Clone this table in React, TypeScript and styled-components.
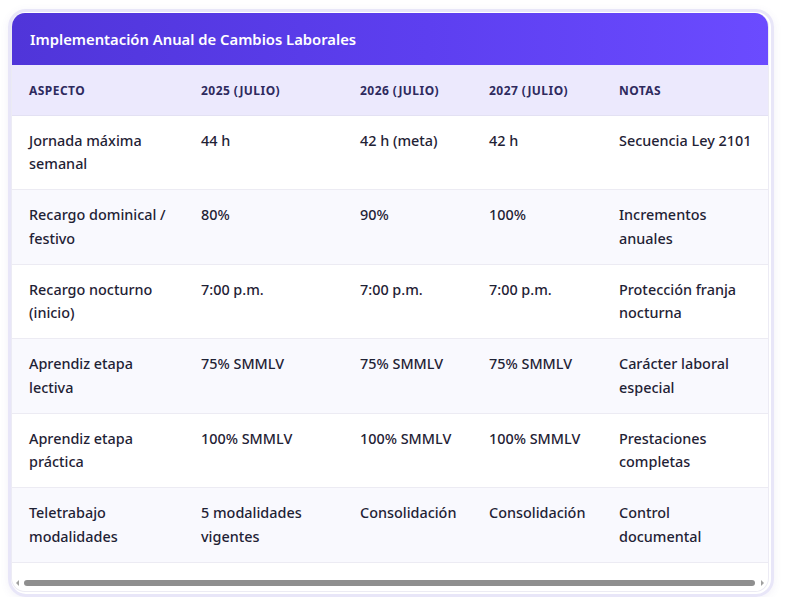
import React from "react";
import styled, { createGlobalStyle } from "styled-components";

const Global = createGlobalStyle`
  html, body { margin: 0; padding: 0; background: #ffffff; }
  body { font-family: "Noto Sans", "Open Sans", sans-serif; }
`;

const Frame = styled.div`
  margin: 9px 15px 0 8px;
  width: 766px;
  box-sizing: border-box;
  border: 3px solid #e8e6f8;
  border-radius: 18px;
  padding: 1px 2px 2px 0;
  box-shadow: 0 2px 8px rgba(90, 80, 160, 0.08);
`;

const Card = styled.div`
  border-radius: 14px;
  overflow: hidden;
  background: #ffffff;
  border: 1px solid #ecebf4;
  border-top: none;
`;

const Header = styled.div`
  height: 52px;
  display: flex;
  align-items: center;
  padding: 0 18px;
  background: linear-gradient(90deg, #5035d9 0%, #5d3ff0 55%, #6b4bff 100%);
  color: #ffffff;
  font-size: 14.8px;
  font-weight: 600;
`;

const Scroller = styled.div`
  overflow: hidden;
`;

const Table = styled.table`
  width: 772px;
  border-collapse: collapse;
  table-layout: fixed;
`;

const HeadRow = styled.tr`
  background: #ece9fd;
`;

const Th = styled.th<{ $w: number }>`
  width: ${(p) => p.$w}px;
  height: 50px;
  box-sizing: border-box;
  padding: 1px 17px 0;
  text-align: left;
  font-size: 12px;
  font-weight: 700;
  letter-spacing: 0.45px;
  color: #2e2a5e;
  text-transform: uppercase;
  border-bottom: 1px solid #e3e1f3;
`;

const Row = styled.tr<{ $alt: boolean }>`
  background: ${(p) => (p.$alt ? "#f9f9fe" : "#ffffff")};
  border-bottom: 1px solid #ecebf3;
`;

const Td = styled.td<{ $pr?: number }>`
  padding: 13px ${(p) => p.$pr ?? 17}px 13.5px 17px;
  vertical-align: top;
  font-size: 14.4px;
  font-weight: 500;
  line-height: 23.5px;
  color: #1f2235;
`;

const ScrollBar = styled.div`
  display: flex;
  align-items: center;
  gap: 3px;
  height: 12px;
  margin: 14px 0 2px;
  padding: 0 4px 0 4px;
`;

const Arrow = styled.span<{ $dir: "left" | "right" }>`
  width: 0;
  height: 0;
  border-top: 3px solid transparent;
  border-bottom: 3px solid transparent;
  ${(p) =>
    p.$dir === "left"
      ? "border-right: 3px solid #a0a0a0;"
      : "border-left: 3px solid #a0a0a0;"}
`;

const Track = styled.div`
  flex: 1;
  height: 6px;
  display: flex;
  padding: 0 3px 0 2px;
`;

const Thumb = styled.div`
  flex: 1;
  height: 6px;
  border-radius: 3px;
  background: #8f8f8f;
`;

const cols = [
  { label: "Aspecto", w: 172 },
  { label: "2025 (julio)", w: 159 },
  { label: "2026 (julio)", w: 129 },
  { label: "2027 (julio)", w: 130 },
  { label: "Notas", w: 182 },
];

const rows: string[][] = [
  ["Jornada máxima semanal", "44 h", "42 h (meta)", "42 h", "Secuencia Ley 2101"],
  ["Recargo dominical / festivo", "80%", "90%", "100%", "Incrementos anuales"],
  ["Recargo nocturno (inicio)", "7:00 p.m.", "7:00 p.m.", "7:00 p.m.", "Protección franja nocturna"],
  ["Aprendiz etapa lectiva", "75% SMMLV", "75% SMMLV", "75% SMMLV", "Carácter laboral especial"],
  ["Aprendiz etapa práctica", "100% SMMLV", "100% SMMLV", "100% SMMLV", "Prestaciones completas"],
  ["Teletrabajo modalidades", "5 modalidades vigentes", "Consolidación", "Consolidación", "Control documental"],
];

export default function App() {
  return (
    <>
      <Global />
      <Frame>
        <Card>
          <Header>Implementación Anual de Cambios Laborales</Header>
          <Scroller>
            <Table>
              <thead>
                <HeadRow>
                  {cols.map((c) => (
                    <Th key={c.label} $w={c.w}>
                      {c.label}
                    </Th>
                  ))}
                </HeadRow>
              </thead>
              <tbody>
                {rows.map((r, i) => (
                  <Row key={i} $alt={i % 2 === 1}>
                    {r.map((cell, j) => (
                      <Td key={j} $pr={j === 4 ? 31 : 17}>
                        {cell}
                      </Td>
                    ))}
                  </Row>
                ))}
              </tbody>
            </Table>
          </Scroller>
          <ScrollBar>
            <Arrow $dir="left" />
            <Track>
              <Thumb />
            </Track>
            <Arrow $dir="right" />
          </ScrollBar>
        </Card>
      </Frame>
    </>
  );
}
